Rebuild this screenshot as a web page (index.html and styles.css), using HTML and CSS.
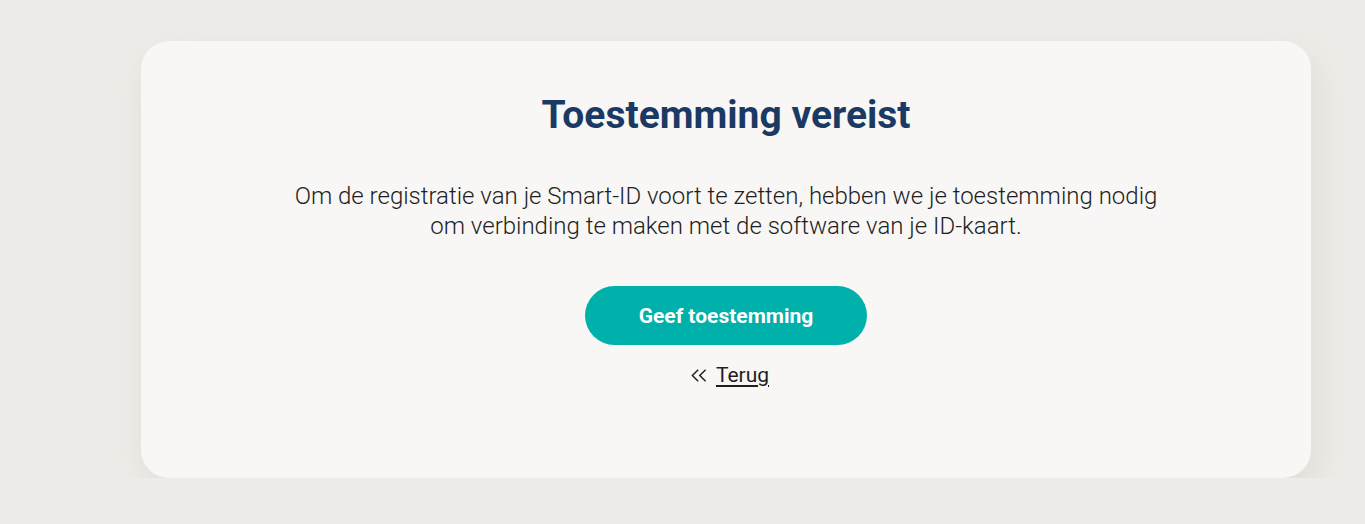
FILE: index.html
```html
<!DOCTYPE html>
<html lang="nl">
<head>
<meta charset="utf-8">
<title>Toestemming vereist</title>
<link rel="stylesheet" href="styles.css">
</head>
<body>
<main class="page">
  <section class="card">
    <h1 class="title">Toestemming vereist</h1>
    <p class="text">Om de registratie van je Smart-ID voort te zetten, hebben we je toestemming nodig om verbinding te maken met de software van je ID-kaart.</p>
    <button class="btn" type="button">Geef toestemming</button>
    <a class="back" href="#">
      <svg class="back-icon" width="17" height="13" viewBox="0 0 17 13" aria-hidden="true"><path d="M8.2 0.7 L2.4 6.5 L8.2 12.3 M15.6 0.7 L9.8 6.5 L15.6 12.3" fill="none" stroke="#222" stroke-width="1.5"/></svg>
      <span class="back-text">Terug</span>
    </a>
  </section>
</main>
</body>
</html>
```
FILE: styles.css
```css
html, body {
  margin: 0;
  padding: 0;
}
body {
  background: #edece8;
  font-family: Roboto, "Liberation Sans", sans-serif;
  color: #222;
}
.page {
  padding: 41px 54px 0 141px;
}
.card {
  width: 1170px;
  height: 437px;
  box-sizing: border-box;
  background: #f8f7f5;
  border-radius: 28px;
  box-shadow: 6px 14px 34px rgba(120, 115, 100, 0.12);
  display: flex;
  flex-direction: column;
  align-items: center;
  padding-top: 51px;
}
.title {
  margin: 0;
  font-size: 39px;
  font-weight: 700;
  line-height: 46px;
  color: #1b3a63;
}
.text {
  margin: 43px 0 0;
  max-width: 880px;
  text-align: center;
  font-size: 24px;
  font-weight: 300;
  line-height: 30px;
  color: #1e1e1e;
}
.btn {
  margin-top: 45px;
  width: 282px;
  height: 59px;
  border: none;
  border-radius: 30px;
  background: #00b0aa;
  color: #fff;
  font-family: Roboto, "Liberation Sans", sans-serif;
  font-size: 21px;
  font-weight: 700;
  cursor: pointer;
}
.back {
  margin-top: 17px;
  margin-left: 7px;
  display: flex;
  align-items: center;
  gap: 9px;
  color: #1e1e1e;
  text-decoration: none;
  font-size: 21px;
  line-height: 26px;
}
.back-text {
  text-decoration: underline;
  text-decoration-thickness: 2px;
  text-underline-offset: 3px;
}
.back-icon {
  display: block;
}
```
